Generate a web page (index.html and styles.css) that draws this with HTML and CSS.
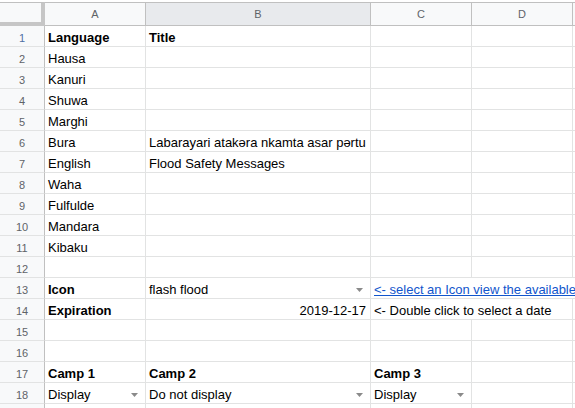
FILE: index.html
```html
<!DOCTYPE html>
<html>
<head>
<meta charset="utf-8">
<link rel="stylesheet" href="styles.css">
</head>
<body>
<div class="sheet">
  <div class="corner"></div>
  <div class="ch">A</div>
  <div class="ch sel">B</div>
  <div class="ch">C</div>
  <div class="ch">D</div>
  <div class="ch"></div>

  <div class="rh act">1</div><div class="c b">Language</div><div class="c b">Title</div><div class="c"></div><div class="c"></div><div class="c"></div>
  <div class="rh">2</div><div class="c">Hausa</div><div class="c"></div><div class="c"></div><div class="c"></div><div class="c"></div>
  <div class="rh">3</div><div class="c">Kanuri</div><div class="c"></div><div class="c"></div><div class="c"></div><div class="c"></div>
  <div class="rh">4</div><div class="c">Shuwa</div><div class="c"></div><div class="c"></div><div class="c"></div><div class="c"></div>
  <div class="rh">5</div><div class="c">Marghi</div><div class="c"></div><div class="c"></div><div class="c"></div><div class="c"></div>
  <div class="rh">6</div><div class="c">Bura</div><div class="c">Labarayari atakəra nkamta asar pərtu</div><div class="c"></div><div class="c"></div><div class="c"></div>
  <div class="rh">7</div><div class="c">English</div><div class="c">Flood Safety Messages</div><div class="c"></div><div class="c"></div><div class="c"></div>
  <div class="rh">8</div><div class="c">Waha</div><div class="c"></div><div class="c"></div><div class="c"></div><div class="c"></div>
  <div class="rh">9</div><div class="c">Fulfulde</div><div class="c"></div><div class="c"></div><div class="c"></div><div class="c"></div>
  <div class="rh">10</div><div class="c">Mandara</div><div class="c"></div><div class="c"></div><div class="c"></div><div class="c"></div>
  <div class="rh">11</div><div class="c">Kibaku</div><div class="c"></div><div class="c"></div><div class="c"></div><div class="c"></div>
  <div class="rh">12</div><div class="c"></div><div class="c"></div><div class="c"></div><div class="c"></div><div class="c"></div>
  <div class="rh">13</div><div class="c b">Icon</div><div class="c dd"><span>flash flood</span><svg class="arr" width="7" height="4" viewBox="0 0 7 4"><path d="M0 0H7L3.5 4Z"/></svg></div><div class="c span3"><a class="link">&lt;- select an Icon view the available icons</a></div>
  <div class="rh">14</div><div class="c b">Expiration</div><div class="c r">2019-12-17</div><div class="c span2">&lt;- Double click to select a date</div><div class="c"></div>
  <div class="rh">15</div><div class="c"></div><div class="c"></div><div class="c"></div><div class="c"></div><div class="c"></div>
  <div class="rh">16</div><div class="c"></div><div class="c"></div><div class="c"></div><div class="c"></div><div class="c"></div>
  <div class="rh">17</div><div class="c b">Camp 1</div><div class="c b">Camp 2</div><div class="c b">Camp 3</div><div class="c"></div><div class="c"></div>
  <div class="rh">18</div><div class="c dd"><span>Display</span><svg class="arr" width="7" height="4" viewBox="0 0 7 4"><path d="M0 0H7L3.5 4Z"/></svg></div><div class="c dd"><span>Do not display</span><svg class="arr" width="7" height="4" viewBox="0 0 7 4"><path d="M0 0H7L3.5 4Z"/></svg></div><div class="c dd"><span>Display</span><svg class="arr" width="7" height="4" viewBox="0 0 7 4"><path d="M0 0H7L3.5 4Z"/></svg></div><div class="c"></div><div class="c"></div>
  <div class="rh">19</div><div class="c"></div><div class="c"></div><div class="c"></div><div class="c"></div><div class="c"></div>
</div>
</body>
</html>
```

FILE: styles.css
```css
html, body {
  margin: 0;
  padding: 0;
  background: #fff;
  overflow: hidden;
}
body {
  width: 575px;
  height: 408px;
  font-family: "Liberation Sans", Arial, sans-serif;
}
.sheet {
  padding-top: 2px;
  display: grid;
  grid-template-columns: 45px 101px 225px 101px 101px 1fr;
  grid-template-rows: 24px repeat(19, 21px);
  width: 700px;
}
.corner {
  box-sizing: border-box;
  background: #f8f9fa;
  border-top: 1px solid #c0c0c0;
  border-right: 4px solid #c6c6c6;
  border-bottom: 4px solid #c6c6c6;
}
.ch {
  box-sizing: border-box;
  background: #f8f9fa;
  border-top: 1px solid #c0c0c0;
  border-right: 1px solid #c0c0c0;
  border-bottom: 1px solid #c0c0c0;
  color: #5f6368;
  font-size: 11px;
  text-align: center;
  line-height: 22px;
}
.ch.sel {
  background: #e8eaed;
}
.rh {
  box-sizing: border-box;
  background: #f8f9fa;
  border-right: 1px solid #c0c0c0;
  border-bottom: 1px solid #e2e3e3;
  color: #5f6368;
  font-size: 11px;
  text-align: center;
  line-height: 24px;
  overflow: hidden;
}
.rh.act {
  color: #4f6fa3;
}
.c {
  box-sizing: border-box;
  border-right: 1px solid #e2e3e3;
  border-bottom: 1px solid #e2e3e3;
  padding: 0 3px;
  font-size: 13px;
  line-height: 24px;
  color: #000;
  white-space: nowrap;
  overflow: hidden;
}
.b {
  font-weight: bold;
}
.r {
  text-align: right;
  padding-right: 4px;
}
.dd {
  display: flex;
  align-items: flex-start;
  justify-content: space-between;
  padding-right: 7px;
}
.arr {
  fill: #8a8a8a;
  flex: none;
  margin-top: 10px;
}
.span2 {
  grid-column: 4 / 6;
}
.span3 {
  grid-column: 4 / 7;
}
.link {
  color: #1155cc;
  text-decoration: underline;
}
```
